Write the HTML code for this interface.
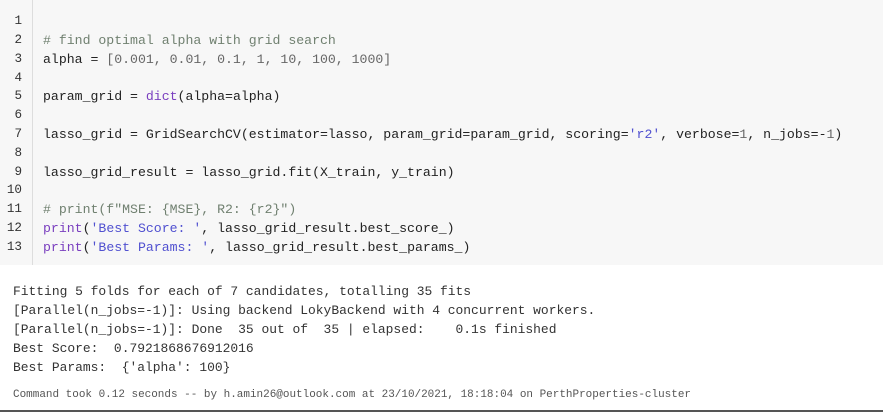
<!DOCTYPE html>
<html><head><style>
body{margin:0;width:883px;height:419px;background:#fff;overflow:hidden;font-family:"Liberation Mono",monospace;}
.code{position:absolute;left:0;top:0;width:883px;height:265px;background:#f7f7f7;}
.gut{position:absolute;left:32px;top:0;width:1px;height:265px;background:#ddd;}
.ln{position:absolute;left:0;width:22px;text-align:right;color:#333;font-size:12.6px;}
.cl{position:absolute;left:43px;color:#222;font-size:13.2px;white-space:pre;}
.c{color:#708070}.n{color:#666}.s{color:#5050d0}.b{color:#7a3fbf}
.out{position:absolute;left:13px;font-size:12.95px;color:#333;white-space:pre;}
.cmd{position:absolute;left:13px;top:389px;font-size:10.97px;color:#555;white-space:pre;}
.hr{position:absolute;left:0;top:410px;width:883px;height:2px;background:#555;}
</style></head><body>
<div class="code"><div class="gut"></div>
<div class="ln" style="top:14px">1</div>
<div class="ln" style="top:33px">2</div><div class="cl c" style="top:33px"># find optimal alpha with grid search</div>
<div class="ln" style="top:52px">3</div><div class="cl" style="top:52px">alpha = <span class="n">[0.001, 0.01, 0.1, 1, 10, 100, 1000]</span></div>
<div class="ln" style="top:71px">4</div>
<div class="ln" style="top:89px">5</div><div class="cl" style="top:89px">param_grid = <span class="b">dict</span>(alpha=alpha)</div>
<div class="ln" style="top:108px">6</div>
<div class="ln" style="top:127px">7</div><div class="cl" style="top:127px">lasso_grid = GridSearchCV(estimator=lasso, param_grid=param_grid, scoring=<span class="s">'r2'</span>, verbose=<span class="n">1</span>, n_jobs=-<span class="n">1</span>)</div>
<div class="ln" style="top:146px">8</div>
<div class="ln" style="top:165px">9</div><div class="cl" style="top:165px">lasso_grid_result = lasso_grid.fit(X_train, y_train)</div>
<div class="ln" style="top:183px">10</div>
<div class="ln" style="top:202px">11</div><div class="cl c" style="top:202px"># print(f"MSE: {MSE}, R2: {r2}")</div>
<div class="ln" style="top:221px">12</div><div class="cl" style="top:221px"><span class="b">print</span>(<span class="s">'Best Score: '</span>, lasso_grid_result.best_score_)</div>
<div class="ln" style="top:240px">13</div><div class="cl" style="top:240px"><span class="b">print</span>(<span class="s">'Best Params: '</span>, lasso_grid_result.best_params_)</div>
</div>
<div class="out" style="top:284px">Fitting 5 folds for each of 7 candidates, totalling 35 fits</div>
<div class="out" style="top:303px">[Parallel(n_jobs=-1)]: Using backend LokyBackend with 4 concurrent workers.</div>
<div class="out" style="top:322px">[Parallel(n_jobs=-1)]: Done  35 out of  35 | elapsed:    0.1s finished</div>
<div class="out" style="top:341px">Best Score:  0.7921868676912016</div>
<div class="out" style="top:360px">Best Params:  {'alpha': 100}</div>
<div class="cmd">Command took 0.12 seconds -- by h.amin26@outlook.com at 23/10/2021, 18:18:04 on PerthProperties-cluster</div>
<div class="hr"></div>
</body></html>
